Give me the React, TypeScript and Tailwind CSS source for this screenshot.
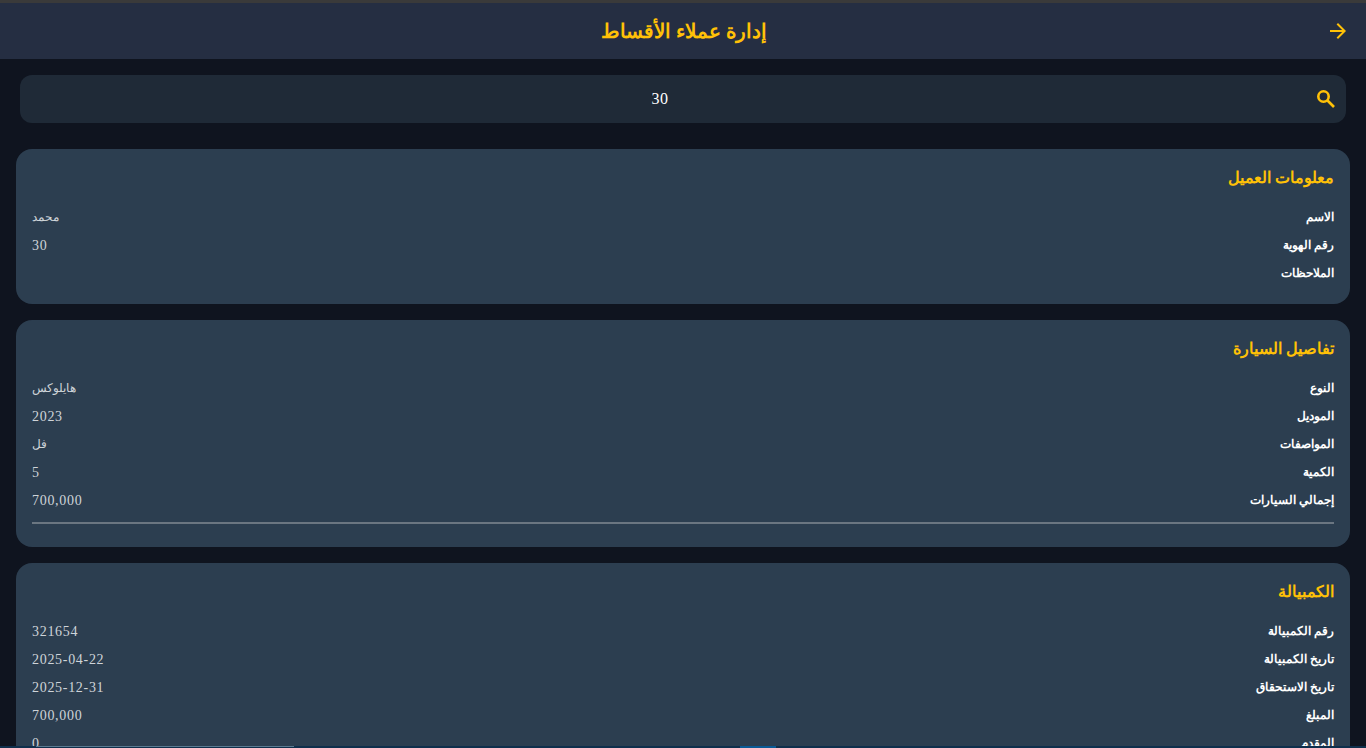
import { MdArrowForward } from "react-icons/md";

const font = "font-['Liberation_Serif','Noto_Sans',serif]";

interface CardRow {
  label: string;
  value?: string;
}

function InfoCard({ title, rows, divider }: { title: string; rows: CardRow[]; divider?: boolean }) {
  return (
    <section className="rounded-2xl bg-[#2c3e50] px-4 pt-4 pb-[17px]">
      <h2 className="mb-3 text-[16px] leading-[26px] font-bold text-[#ffc107]">{title}</h2>
      {rows.map((row) => (
        <div key={row.label} className="flex h-7 items-center justify-between">
          <span className="text-[12px] font-bold text-white">{row.label}</span>
          {/* numbers sit larger than the arabic text */}
          <span className={/\d/.test(row.value ?? "") ? "text-[14px] tracking-[0.7px] text-[#cfd4d9]" : "text-[12px] text-[#cfd4d9]"}>
            {row.value}
          </span>
        </div>
      ))}
      {divider && <hr className="mt-2 mb-1.5 border-t-2 border-[#6b7681]" />}
    </section>
  );
}

export default function App() {
  return (
    <div dir="rtl" className={`relative h-[748px] overflow-hidden bg-[#0f141f] ${font}`}>
      <header className="flex h-[59px] items-center border-t-[3px] border-[#3a3a3a] bg-[#252e42] pr-4 pl-4">
        <MdArrowForward className="h-6 w-6 text-[#ffc107]" />
        <h1 className="flex-1 pl-[26px] text-center text-[20px] font-bold text-[#ffc107]">إدارة عملاء الأقساط</h1>
      </header>

      <div className="mx-5 mt-4 flex h-12 items-center rounded-xl bg-[#1f2a37] pr-2">
        <svg viewBox="0 0 24 24" className="ml-3.5 h-6 w-6 text-[#ffc107]" fill="none" stroke="currentColor" strokeWidth="2.6">
          <circle cx="9.5" cy="9.5" r="5.2" />
          <path d="M13.5 13.5L20 20" />
        </svg>
        <span className="flex-1 text-center text-[16px] tracking-[0.5px] text-white">30</span>
      </div>

      <main className="mx-4 mt-[26px] flex flex-col gap-4">
        <InfoCard
          title="معلومات العميل"
          rows={[
            { label: "الاسم", value: "محمد" },
            { label: "رقم الهوية", value: "30" },
            { label: "الملاحظات" },
          ]}
        />
        <InfoCard
          title="تفاصيل السيارة"
          divider
          rows={[
            { label: "النوع", value: "هايلوكس" },
            { label: "الموديل", value: "2023" },
            { label: "المواصفات", value: "فل" },
            { label: "الكمية", value: "5" },
            { label: "إجمالي السيارات", value: "700,000" },
          ]}
        />
        <InfoCard
          title="الكمبيالة"
          rows={[
            { label: "رقم الكمبيالة", value: "321654" },
            { label: "تاريخ الكمبيالة", value: "2025-04-22" },
            { label: "تاريخ الاستحقاق", value: "2025-12-31" },
            { label: "المبلغ", value: "700,000" },
            { label: "المقدم", value: "0" },
          ]}
        />
      </main>

      {/* bottom bar, nearly cut off by the window */}
      <div className="absolute right-0 bottom-0 left-0 h-0.5 bg-[#0f2f4c]">
        <div className="absolute top-0 left-[36px] h-px w-[258px] bg-[#5b7a90]" />
        <div className="absolute top-0 left-[740px] h-0.5 w-9 bg-[#0a5a96]" />
      </div>
    </div>
  );
}
